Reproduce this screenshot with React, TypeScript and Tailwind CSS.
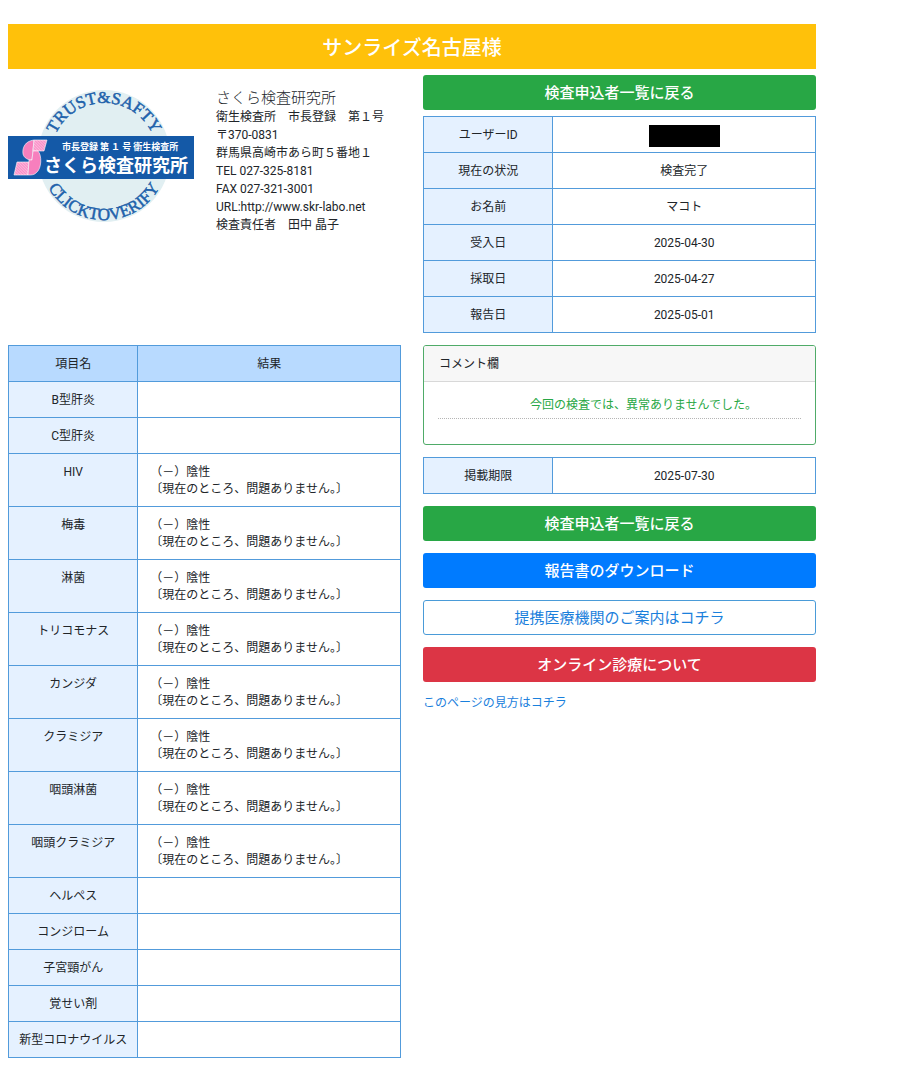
import { clsx } from 'clsx';
import type { ReactNode } from 'react';

const NEGATIVE = ['（－）陰性', '〔現在のところ、問題ありません。〕'];

const results: { name: string; lines: string[] }[] = [
    { name: 'B型肝炎', lines: [] },
    { name: 'C型肝炎', lines: [] },
    { name: 'HIV', lines: NEGATIVE },
    { name: '梅毒', lines: NEGATIVE },
    { name: '淋菌', lines: NEGATIVE },
    { name: 'トリコモナス', lines: NEGATIVE },
    { name: 'カンジダ', lines: NEGATIVE },
    { name: 'クラミジア', lines: NEGATIVE },
    { name: '咽頭淋菌', lines: NEGATIVE },
    { name: '咽頭クラミジア', lines: NEGATIVE },
    { name: 'ヘルペス', lines: [] },
    { name: 'コンジローム', lines: [] },
    { name: '子宮頸がん', lines: [] },
    { name: '覚せい剤', lines: [] },
    { name: '新型コロナウイルス', lines: [] },
];

const labInfo = [
    '衛生検査所　市長登録　第１号',
    '〒370-0831',
    '群馬県高崎市あら町５番地１',
    'TEL 027-325-8181',
    'FAX 027-321-3001',
    'URL:http://www.skr-labo.net',
    '検査責任者　田中 晶子',
];

const status: { label: string; value: ReactNode }[] = [
    {
        label: 'ユーザーID',
        value: <span className="-my-1 inline-block h-[22px] w-[71px] bg-black align-middle" />,
    },
    { label: '現在の状況', value: '検査完了' },
    { label: 'お名前', value: 'マコト' },
    { label: '受入日', value: '2025-04-30' },
    { label: '採取日', value: '2025-04-27' },
    { label: '報告日', value: '2025-05-01' },
];

function LabLogo() {
    return (
        <svg viewBox="0 0 186 134" className="w-[186px] shrink-0 overflow-visible" role="img" aria-label="さくら検査研究所">
            <defs>
                <path id="arc-top" d="M 43 67 A 53 53 0 0 1 149 67" />
                <path id="arc-bottom" d="M 32 67 A 64 64 0 0 0 160 67" />
                <pattern id="stripe" width="2" height="2" patternUnits="userSpaceOnUse" patternTransform="rotate(45)">
                    <rect width="2" height="2" fill="#f98cc6" />
                    <rect width="2" height="1" fill="#fdb6da" />
                </pattern>
            </defs>
            <circle cx="96" cy="67" r="66" fill="#e1eff2" />
            <g fill="#1f62ab" stroke="#1f62ab" strokeWidth="0.5" fontFamily="'Liberation Serif', serif" textAnchor="middle">
                <text fontSize="17">
                    <textPath href="#arc-top" startOffset="50%">TRUST&amp;SAFTY</textPath>
                </text>
                <text fontSize="17">
                    <textPath href="#arc-bottom" startOffset="50%">CLICKTOVERIFY</textPath>
                </text>
            </g>
            <rect x="0" y="47" width="186" height="43" fill="#1459a7" />
            {/* Split S mark: solid lobes, striped arms */}
            <g stroke="#fff" strokeWidth="0.6" strokeLinejoin="round">
                <path d="M26 51 C17 52 14 59 15 65 C16 69 20 71 24 71 Z" fill="#f77fbd" />
                <path d="M26 51 H39 L36 62 H25 Z" fill="url(#stripe)" />
                <path d="M9 73 H21 L20 86 H6 Z" fill="url(#stripe)" />
                <path d="M25 62 H30 C34 66 34 80 28 84 C26 86 23 86 20 86 L21 71 H24 Z" fill="#f77fbd" />
            </g>
            <g fill="#fff" fontFamily="'Noto Sans CJK JP', sans-serif" fontWeight="bold">
                <text x="54" y="61" fontSize="9">市長登録 第 １ 号 衛生検査所</text>
                <text x="36" y="83" fontSize="18">さくら検査研究所</text>
            </g>
        </svg>
    );
}

function InfoTable({ rows }: { rows: { label: string; value: ReactNode }[] }) {
    return (
        <table className="w-full table-fixed border-collapse text-center leading-[17px]">
            <tbody>
                {rows.map((row) => (
                    <tr key={row.label}>
                        <th scope="row" className="w-[33%] border border-[#529bdb] bg-[#e5f1ff] px-2 pt-2.5 pb-2 font-normal">
                            {row.label}
                        </th>
                        <td className="border border-[#529bdb] px-4 pt-2.5 pb-2">{row.value}</td>
                    </tr>
                ))}
            </tbody>
        </table>
    );
}

function ActionButton({ className, children }: { className: string; children: ReactNode }) {
    return (
        <button type="button" className={clsx('block h-[35px] w-full rounded-[3px] pt-0.5 text-center text-[15px]', className)}>
            {children}
        </button>
    );
}

export default function App() {
    return (
        <div className="ml-2 mr-21 bg-white pt-6 pb-8 font-['Roboto','Noto_Sans_CJK_JP',sans-serif] text-xs text-[#212529]" lang="ja">
            <h1 className="bg-[#ffc10a] pt-1 text-center text-xl leading-[41px] font-medium text-white">サンライズ名古屋様</h1>

            <div className="mt-1.5 grid grid-cols-2 gap-x-[22px] gap-y-3">
                <div className="flex items-start gap-[22px] pt-3.5">
                    <LabLogo />
                    <div className="leading-[18px] whitespace-nowrap">
                        <h2 className="text-[15px] leading-[19px] font-light">さくら検査研究所</h2>
                        {labInfo.map((line) => (
                            <p key={line}>{line}</p>
                        ))}
                    </div>
                </div>

                <div className="flex flex-col gap-1.5">
                    <ActionButton className="bg-[#28a745] font-medium text-white">検査申込者一覧に戻る</ActionButton>
                    <InfoTable rows={status} />
                </div>

                <table className="w-full table-fixed border-collapse self-start leading-[17px]">
                    <thead>
                        <tr className="bg-[#b8daff]">
                            <th className="w-[33%] border border-[#529bdb] pt-2.5 pb-2 font-normal">項目名</th>
                            <th className="border border-[#529bdb] pt-2.5 pb-2 font-normal">結果</th>
                        </tr>
                    </thead>
                    <tbody>
                        {results.map(({ name, lines }) => (
                            <tr key={name}>
                                <th scope="row" className="border border-[#529bdb] bg-[#e5f1ff] pt-2.5 pb-2 align-top font-normal">
                                    {name}
                                </th>
                                <td className="border border-[#529bdb] pt-2.5 pr-4 pb-2 pl-[18px] [text-spacing-trim:trim-start]">
                                    {lines.map((line) => (
                                        <p key={line}>{line}</p>
                                    ))}
                                </td>
                            </tr>
                        ))}
                    </tbody>
                </table>

                <div className="flex flex-col gap-3">
                    <section className="rounded-[3px] border border-[#4fab68]">
                        <h2 className="rounded-t-[2px] border-b border-[#d8d8d8] bg-[#f7f7f7] px-[15px] pt-2.5 pb-2 leading-[17px]">
                            コメント欄
                        </h2>
                        <div className="px-[14px] pt-[14px] pb-[25px]">
                            <p className="border-b border-dotted border-[#b5b5b5] pb-1 pl-12 text-center leading-[18px] text-[#28a745]">
                                今回の検査では、異常ありませんでした。
                            </p>
                        </div>
                    </section>
                    <InfoTable rows={[{ label: '掲載期限', value: '2025-07-30' }]} />
                    <ActionButton className="bg-[#28a745] font-medium text-white">検査申込者一覧に戻る</ActionButton>
                    <ActionButton className="bg-[#007bff] font-medium text-white">報告書のダウンロード</ActionButton>
                    <ActionButton className="border border-[#4a9bd8] text-[#1a80dc]">提携医療機関のご案内はコチラ</ActionButton>
                    <ActionButton className="bg-[#dc3545] font-medium text-white">オンライン診療について</ActionButton>
                    <a href="#guide" className="self-start leading-[18px] text-[#1a80dc]">
                        このページの見方はコチラ
                    </a>
                </div>
            </div>
        </div>
    );
}
